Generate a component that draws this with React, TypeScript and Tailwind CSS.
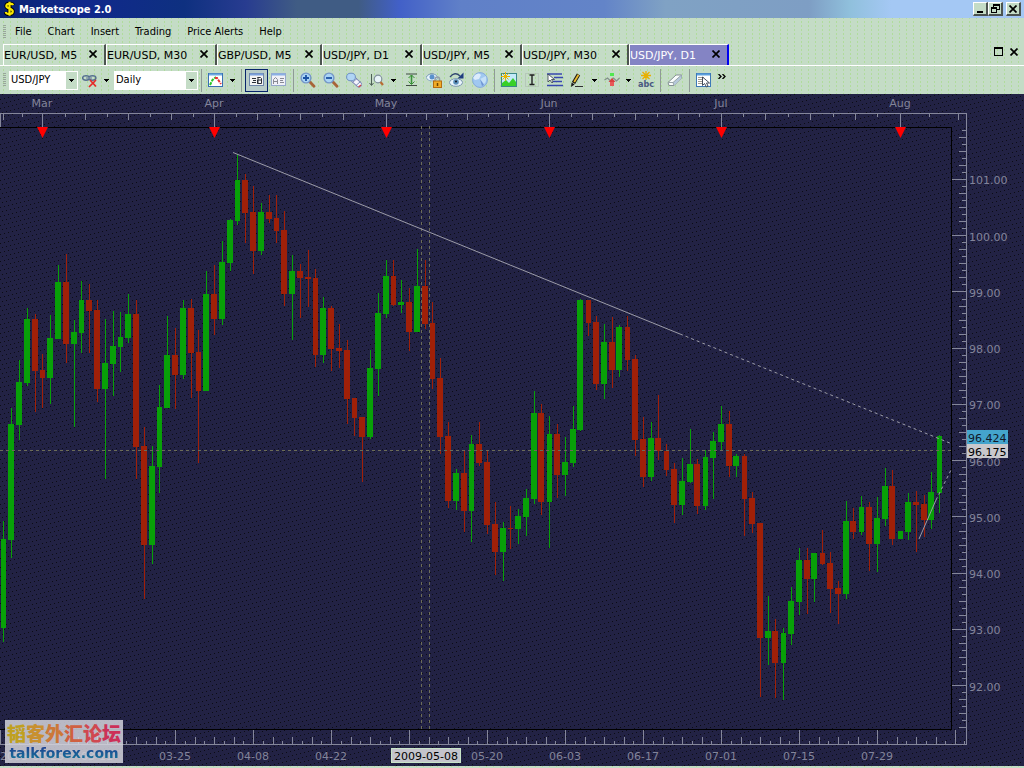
import type { ReactNode } from "react";

const menus = ["File", "Chart", "Insert", "Trading", "Price Alerts", "Help"];

const tabs = [
  { name: "EUR/USD, M5", width: "w-[103px]" },
  { name: "EUR/USD, M30", width: "w-[111px]" },
  { name: "GBP/USD, M5", width: "w-[105px]" },
  { name: "USD/JPY, D1", width: "w-[100px]" },
  { name: "USD/JPY, M5", width: "w-[100px]" },
  { name: "USD/JPY, M30", width: "w-[107px]" },
  { name: "USD/JPY, D1", width: "w-[100px]", active: true },
];

// direction, high, body top, body bottom, low
type Candle = [0 | 1, number, number, number, number];
const candles: Candle[] = [
  [1, 521, 539, 628, 642], [1, 408, 424, 540, 558], [1, 360, 382, 425, 440], [1, 308, 319, 383, 386],
  [0, 314, 319, 371, 412], [0, 354, 370, 378, 408], [1, 315, 338, 378, 404], [1, 265, 282, 339, 339],
  [0, 254, 282, 344, 363], [1, 320, 332, 344, 427], [1, 281, 300, 333, 353], [0, 284, 300, 311, 353],
  [0, 300, 310, 389, 402], [1, 319, 363, 389, 479], [1, 311, 346, 364, 396], [1, 312, 337, 347, 372],
  [1, 294, 314, 338, 343], [0, 300, 314, 447, 479], [0, 427, 446, 545, 599], [1, 446, 466, 545, 564],
  [1, 385, 407, 467, 493], [1, 316, 355, 408, 408], [0, 328, 355, 375, 409], [1, 300, 308, 375, 379],
  [0, 299, 308, 353, 398], [0, 330, 352, 391, 463], [1, 271, 294, 391, 391], [0, 265, 294, 319, 335],
  [1, 241, 262, 319, 325], [1, 219, 220, 263, 271], [1, 154, 180, 221, 225], [0, 174, 180, 213, 243],
  [0, 186, 212, 251, 274], [1, 203, 212, 251, 255], [0, 195, 212, 219, 223], [0, 195, 218, 231, 243],
  [0, 211, 230, 294, 306], [1, 255, 271, 294, 340], [0, 264, 271, 278, 318], [0, 250, 277, 279, 307],
  [0, 269, 278, 355, 367], [1, 297, 308, 355, 363], [0, 306, 308, 349, 371], [0, 324, 348, 351, 368],
  [0, 340, 350, 399, 424], [0, 398, 398, 418, 436], [0, 417, 417, 437, 482], [1, 350, 368, 437, 439],
  [1, 293, 313, 369, 396], [1, 260, 276, 314, 318], [0, 260, 276, 305, 306], [1, 280, 302, 305, 313],
  [0, 288, 302, 332, 351], [1, 249, 286, 332, 332], [0, 260, 286, 324, 329], [0, 302, 323, 379, 389],
  [0, 358, 378, 437, 454], [0, 422, 436, 501, 508], [1, 469, 473, 501, 510], [0, 451, 473, 511, 532],
  [1, 435, 444, 511, 542], [0, 422, 444, 463, 466], [0, 450, 462, 525, 534], [0, 502, 524, 552, 575],
  [1, 522, 528, 552, 581], [0, 506, 528, 529, 549], [1, 509, 516, 529, 544], [1, 489, 498, 517, 536],
  [1, 391, 413, 499, 504], [0, 404, 413, 502, 515], [1, 416, 434, 502, 548], [0, 424, 434, 475, 498],
  [1, 437, 462, 475, 496], [1, 406, 429, 463, 467], [1, 299, 300, 430, 431], [0, 300, 300, 323, 336],
  [0, 316, 322, 384, 390], [1, 324, 342, 384, 399], [0, 317, 342, 370, 388], [1, 325, 327, 370, 377],
  [0, 316, 327, 360, 371], [0, 355, 359, 440, 456], [0, 417, 439, 477, 487], [1, 422, 438, 477, 481],
  [0, 395, 438, 451, 460], [0, 444, 451, 470, 476], [0, 463, 469, 505, 523], [1, 458, 481, 505, 515],
  [1, 429, 464, 482, 483], [0, 459, 464, 506, 514], [1, 450, 457, 506, 510], [1, 432, 441, 458, 499],
  [1, 406, 424, 442, 450], [0, 411, 424, 466, 477], [1, 454, 456, 466, 477], [0, 454, 456, 499, 536],
  [0, 492, 498, 524, 533], [0, 523, 523, 638, 697], [1, 596, 631, 638, 665], [0, 619, 631, 663, 698],
  [1, 628, 633, 663, 700], [1, 587, 601, 634, 645], [1, 548, 560, 602, 615], [0, 548, 560, 579, 614],
  [1, 553, 553, 579, 602], [0, 530, 553, 564, 565], [0, 552, 563, 589, 613], [0, 581, 588, 594, 624],
  [1, 501, 521, 594, 599], [0, 508, 521, 532, 539], [1, 496, 507, 532, 535], [0, 502, 507, 544, 571],
  [1, 497, 518, 544, 572], [1, 468, 486, 519, 526], [0, 470, 486, 539, 545], [1, 531, 531, 539, 539],
  [1, 493, 502, 532, 540], [0, 491, 502, 505, 552], [0, 495, 504, 520, 537], [1, 472, 492, 520, 529],
  [1, 435, 436, 493, 513],
];

const months = [
  { label: "Mar", x: 42 },
  { label: "Apr", x: 214 },
  { label: "May", x: 386 },
  { label: "Jun", x: 549 },
  { label: "Jul", x: 721 },
  { label: "Aug", x: 900 },
];
const topMedium = [3, 85, 128, 171, 257, 300, 343, 426, 467, 508, 592, 635, 678, 765, 810, 855, 958];
const topSmall = [22, 65, 107, 150, 193, 236, 279, 322, 364, 406, 447, 488, 528, 571, 614, 657, 699, 743, 788, 833, 877, 929];

const dates = [
  { label: "03-11", x: 97 },
  { label: "03-25", x: 175 },
  { label: "04-08", x: 253 },
  { label: "04-22", x: 331 },
  { label: "05-20", x: 487 },
  { label: "06-03", x: 565 },
  { label: "06-17", x: 643 },
  { label: "07-01", x: 721 },
  { label: "07-15", x: 799 },
  { label: "07-29", x: 877 },
];

const priceY = (price: number) => Math.round(685.5 - (price - 92) * 56.25);
const prices = [101, 100, 99, 98, 97, 96, 95, 94, 93, 92];
const bottomTicks = Array.from({ length: 98 }, (_, i) => i);
const rightTicks = Array.from({ length: 86 }, (_, i) => i - 7);
const dots = Array.from({ length: 324 }, (_, i) => ({ x: i % 18, y: Math.floor(i / 18) })).filter(
  ({ x, y }) => (x + y * 4) % 18 === 0,
);

function Icon({ children }: { children: ReactNode }) {
  return (
    <svg viewBox="0 0 16 16" className="size-4 shrink-0" aria-hidden="true">
      {children}
    </svg>
  );
}

function Tool({ label, children }: { label: string; children: ReactNode }) {
  return (
    <button type="button" aria-label={label} className="flex size-4 shrink-0 items-center justify-center">
      <Icon>{children}</Icon>
    </button>
  );
}

function Drop({ label }: { label: string }) {
  return (
    <button
      type="button"
      aria-label={label}
      className="-mr-[5px] -ml-[7px] flex h-4 w-4 shrink-0 items-center justify-center"
    >
      <Arrow />
    </button>
  );
}

function Arrow() {
  return (
    <svg viewBox="0 0 5 3" className="h-[3px] w-[5px]" aria-hidden="true" shapeRendering="crispEdges">
      <path d="M0 0h5v1h-1v1h-1v1h-1v-1h-1v-1h-1z" fill="#000" />
    </svg>
  );
}

function Separator() {
  return <span className="-mx-px h-[23px] w-px shrink-0 bg-[#8f9a96]" />;
}

function Grip() {
  return (
    <span className="h-[14px] w-[3px] shrink-0 bg-[repeating-linear-gradient(180deg,#98a69a_0px,#98a69a_1px,transparent_1px,transparent_2px)]" />
  );
}

function Cross() {
  return (
    <svg viewBox="0 0 8 8" className="size-2" aria-hidden="true">
      <path d="M0.5 0.5L7.5 7.5M7.5 0.5L0.5 7.5" stroke="#000" strokeWidth="1.7" />
    </svg>
  );
}

function Combo({ label, value, width }: { label: string; value: string; width: string }) {
  return (
    <label className={`flex h-[19px] shrink-0 items-center border border-white bg-white ${width}`}>
      <select
        aria-label={label}
        defaultValue={value}
        className="min-w-0 flex-1 appearance-none bg-white pl-px text-[11px] leading-4 outline-none"
      >
        <option>{value}</option>
      </select>
      <span className="flex h-full w-[11px] items-center justify-center bg-[#c4dcc6]">
        <Arrow />
      </span>
    </label>
  );
}

function Magnifier({ sign }: { sign: string }) {
  return (
    <>
      <path d="M10 10L14 14.2" stroke="#a86438" strokeWidth="2.8" strokeLinecap="round" />
      <circle cx="6" cy="6" r="4.9" fill="#a9d4f4" stroke="#7596c8" strokeWidth="1.4" />
      <path d={sign} stroke="#1c52a4" strokeWidth="1.8" />
    </>
  );
}

function TitleBar() {
  const control =
    "flex h-[14px] w-[15px] items-center justify-center border-t border-l border-r-2 border-b-2 border-t-white border-l-white border-r-[#4c5450] border-b-[#4c5450] bg-[#c4dcc6]";
  return (
    <header className="flex h-[18px] items-center bg-[linear-gradient(90deg,#0a2472_0%,#10288c_8%,#0e3080_18%,#283c90_24%,#405c84_29%,#405c84_35%,#4260c8_39%,#6080c8_45%,#6384c8_59%,#80a2c4_65%,#7e9ec4_79%,#90c0dc_83%,#a4c8f4_87%,#a4c8f4_100%)] pr-[3px] pl-1">
      <svg viewBox="0 0 11 16" className="h-4 w-[11px]" aria-hidden="true">
        <path
          d="M5.5 0.8v14M9 4.2C8.4 2.4 2.4 1.8 2.3 5C2.2 8 8.9 7 8.8 10.5C8.7 14 2 13.6 1.8 11"
          stroke="#000"
          strokeWidth="4"
          fill="none"
        />
        <path
          d="M5.5 0.8v14M9 4.2C8.4 2.4 2.4 1.8 2.3 5C2.2 8 8.9 7 8.8 10.5C8.7 14 2 13.6 1.8 11"
          stroke="#f8e800"
          strokeWidth="2.2"
          fill="none"
        />
      </svg>
      <h1 className="ml-1 flex-1 pt-px font-['DejaVu_Sans_Condensed','DejaVu_Sans',sans-serif] text-[11px] leading-4 font-bold text-white">
        Marketscope 2.0
      </h1>
      <button type="button" aria-label="Minimize" className={control}>
        <span className="mt-1.5 h-0.5 w-1.5 bg-black" />
      </button>
      <button type="button" aria-label="Restore" className={control}>
        <svg viewBox="0 0 9 9" className="size-[9px]" aria-hidden="true" shapeRendering="crispEdges">
          <path d="M2.5 3V0.5h6v5H6M2 1.5h6M0.5 3.5h5v5h-5zM0 4.5h6" stroke="#000" fill="none" />
        </svg>
      </button>
      <button type="button" aria-label="Close" className={`ml-[3px] ${control}`}>
        <Cross />
      </button>
    </header>
  );
}

function Toolbar() {
  return (
    <div role="toolbar" aria-label="Chart tools" className="flex h-7 items-center gap-[7px] pl-[3px]">
      <div className="flex items-center gap-[3px]">
        <Grip />
        <Combo label="Instrument" value="USD/JPY" width="w-[69px]" />
      </div>
      <div className="-mr-[2px] -ml-[3px] flex items-center gap-[7px]">
        <Tool label="Unlink">
          <ellipse cx="4" cy="6" rx="3.4" ry="2.2" fill="none" stroke="#567090" strokeWidth="1.5" />
          <ellipse cx="10.5" cy="6" rx="3.4" ry="2.2" fill="none" stroke="#567090" strokeWidth="1.5" />
          <path d="M4 6h6" stroke="#7d90a8" strokeWidth="1.4" />
          <path d="M8 8l6 6.5M14 8l-7 7" stroke="#e62828" strokeWidth="1.7" />
        </Tool>
        <Drop label="Link options" />
      </div>
      <div className="-mr-[3px]">
        <Combo label="Period" value="Daily" width="w-[84px]" />
      </div>
      <Separator />
      <Tool label="Chart type">
        <rect x="0.5" y="1.5" width="14" height="13" fill="#fff" stroke="#3870b4" />
        <path d="M1 2.5h13" stroke="#6eaae0" strokeWidth="2" />
        <path d="M2 13l2.500-5l3.500-3" stroke="#28c828" strokeWidth="2" strokeDasharray="3 1" fill="none" />
        <path d="M7 6h2l2 3l2 3" stroke="#e63232" strokeWidth="2" strokeDasharray="3 1" fill="none" />
      </Tool>
      <Drop label="Chart type options" />
      <Separator />
      <button
        type="button"
        aria-label="Bid prices"
        aria-pressed="true"
        className="-mr-1 -ml-[3px] flex h-[23px] w-[23px] shrink-0 items-center justify-center border border-[#08246b] bg-[#b8ccc8]"
      >
        <Icon>
          <rect x="0.5" y="1.5" width="14" height="12" fill="#f4f4f4" stroke="#7088ac" />
          <path d="M1 2.5h13" stroke="#7aa0dc" strokeWidth="2" />
          <path d="M3 6.500h4M4 8.500h3M3 10.500h4" stroke="#2c3038" fill="none" />
          <path d="M8.500 5.500h3l1 1v1.500h-4v3.500h4v-3.500M9 5v7" stroke="#2c3038" fill="none" />
        </Icon>
      </button>
      <Tool label="Ask prices">
        <rect x="0.5" y="1.5" width="14" height="12" fill="#f0f0f8" stroke="#96a8cc" />
        <path d="M1 2.5h13" stroke="#8ab0e4" strokeWidth="2" />
        <path d="M2.5 12V7.5L4.5 5.5L6.5 7.5V12M3 9.5h3.5M9 6.5h4M9 8.5h3M9 10.5h4" stroke="#888a94" fill="none" />
      </Tool>
      <Separator />
      <Tool label="Zoom in">
        <Magnifier sign="M3 6h6M6 3v6" />
      </Tool>
      <Tool label="Zoom out">
        <Magnifier sign="M3 6h6" />
      </Tool>
      <Tool label="Zoom back">
        <path d="M7 7l6 5.500" stroke="#8088b8" strokeWidth="6" strokeLinecap="round" />
        <path d="M7 7l6 5.500" stroke="#f4f4fc" strokeWidth="4.400" strokeLinecap="round" />
        <ellipse cx="5" cy="5" rx="4.4" ry="3.8" fill="#b0d4f4" stroke="#6d90c4" />
        <path d="M6.500 10.500l4.500-4M10 13.500l4.500-4" stroke="#6d80a8" strokeWidth="0.900" />
        <path d="M12.500 15l2.500-2" stroke="#d04040" strokeWidth="1.3" />
      </Tool>
      <Tool label="Vertical zoom">
        <path d="M2.5 2v11M0.500 11l2 2.500l2-2.500" stroke="#4c6054" fill="none" />
        <circle cx="9" cy="7" r="3.8" fill="#e8f4f8" stroke="#80909c" strokeWidth="1.2" />
        <path d="M11.5 10l2.5 3" stroke="#b86c34" strokeWidth="2.2" />
      </Tool>
      <Drop label="Zoom options" />
      <Tool label="Fit vertically">
        <path d="M3 2h11M3 13.500h11" stroke="#404c44" />
        <path d="M8.5 3v9" stroke="#389038" strokeWidth="1.6" />
        <path d="M5.5 6l3-3l3 3M5.5 9.500l3 3l3-3" stroke="#389038" fill="none" />
      </Tool>
      <Tool label="Lock view">
        <path d="M0 5q5-6 11-1" stroke="#607890" fill="none" />
        <ellipse cx="6" cy="5.5" rx="5.500" ry="3.400" fill="#e8f4fc" stroke="#8cacc4" />
        <circle cx="6" cy="5" r="2.500" fill="#5890cc" />
        <path d="M9 9V7.500a2.300 2.500 0 0 1 4.600 0V9" stroke="#94a0a8" strokeWidth="1.500" fill="none" />
        <rect x="7.500" y="9" width="8" height="6.500" fill="#f0ac28" stroke="#b46c10" />
        <path d="M11.500 11v3" stroke="#704400" strokeWidth="1.500" />
      </Tool>
      <Tool label="Follow price">
        <ellipse cx="7" cy="10.500" rx="6.500" ry="3.800" fill="#e8f4fc" stroke="#7c98b0" />
        <circle cx="7" cy="10" r="2.800" fill="#5c90bc" />
        <circle cx="7" cy="9.500" r="1" fill="#101828" />
        <path d="M1 5q5-6 10-1" stroke="#344870" strokeWidth="1.300" fill="none" />
        <path d="M14.500 0.500v6h-6z" fill="#203c80" />
      </Tool>
      <Tool label="World view">
        <circle cx="8" cy="8" r="7.400" fill="#a0c8f0" stroke="#84aadc" />
        <path d="M3 3q4-3 6 0l-2 4l-4 1l-2-2z" fill="#dcecfc" />
        <path d="M8 7l6-3q1 5-2 8z" fill="#c4e0f8" />
        <path d="M8 7l4 6l-2 1z" fill="#6e94d4" />
      </Tool>
      <Separator />
      <Tool label="Indicators">
        <rect x="0.500" y="1.500" width="15" height="13" fill="#c4eaf8" stroke="#3c8888" />
        <path d="M1 14v-3l4-3l3 3l4-5l3 4v4z" fill="#38d028" />
        <path d="M4.500 0v9M0 4.500h9M1.500 1.500l6 6M7.500 1.500l-6 6" stroke="#e8b400" />
      </Tool>
      <Tool label="Text note">
        <rect x="1.500" y="1.500" width="13" height="13" fill="none" stroke="#a8b4ac" strokeDasharray="1 1" />
        <path d="M5.500 3h5M5.500 12.500h5M8 3v9" stroke="#202020" strokeWidth="1.400" />
      </Tool>
      <Tool label="Horizontal lines">
        <path d="M0 2h15M7 5.500h9M6 9.500h9M0 13.500h16" stroke="#3848b0" strokeWidth="1.400" />
        <path d="M1 2v8l2-2l2 3l1-1l-1.500-2.500h3z" fill="#fff" stroke="#303848" strokeWidth="0.800" />
      </Tool>
      <Tool label="Draw">
        <path d="M3.500 11L8.500 2.500" stroke="#201c10" strokeWidth="3.800" />
        <path d="M4.200 10L8.500 2.800" stroke="#e8bc30" strokeWidth="1.800" />
        <path d="M1.600 10.500l-.600 4.500l3.600-2.500z" fill="#181818" />
        <path d="M5 14.500h8" stroke="#303030" />
      </Tool>
      <Drop label="Draw options" />
      <Tool label="Signals">
        <rect x="6" y="1" width="4" height="3" fill="#50e850" />
        <path d="M0.500 8l3-2l3 3l3-3l3 3l3-3" stroke="#84908c" strokeWidth="1.200" fill="none" />
        <path d="M8 6l3.500 4H4.500z" fill="#d84040" />
        <rect x="6" y="10" width="4" height="4" fill="#e85858" />
      </Tool>
      <Drop label="Signal options" />
      <button type="button" aria-label="Label" className="flex h-[18px] w-4 shrink-0 flex-col items-center">
        <svg viewBox="0 0 10 9" className="h-[9px] w-[10px] shrink-0" aria-hidden="true">
          <path d="M5 0v9M0 4.500h10M1.500 1l7 7M8.500 1l-7 7" stroke="#e8b000" strokeWidth="1.300" />
        </svg>
        <span className="text-[9px] leading-[8px] font-bold text-[#485880]">abc</span>
      </button>
      <Separator />
      <Tool label="Erase">
        <path d="M1 10.500L9 3h5.500v3L7 13.500H2z" fill="#f8fcfc" stroke="#849094" />
        <path d="M7 13.500L14.500 6V3L6 10.500z" fill="#b4c8dc" />
        <path d="M1 10.500h5L14.500 3M6 10.500l1 3" stroke="#98a4a8" fill="none" />
      </Tool>
      <Separator />
      <Tool label="Data window">
        <rect x="0.500" y="1.500" width="14" height="13" fill="#fff" stroke="#3c78b8" />
        <path d="M1 2.500h13" stroke="#5ca0dc" strokeWidth="2" />
        <path d="M2 5.500h6M2 7.500h4M2 9.500h4M2 11.500h4" stroke="#a09c90" />
        <path d="M6.500 5v8.500l2-2l2 3.500l1.500-1l-1.500-3h3z" fill="#fff" stroke="#303848" strokeWidth="0.900" />
      </Tool>
      <button type="button" aria-label="More tools" className="mb-2 -ml-px">
        <svg viewBox="0 0 8 5" className="h-[5px] w-2" aria-hidden="true">
          <path d="M0.500 0l2.500 2.500l-2.500 2.500M4.500 0l2.500 2.500l-2.500 2.500" stroke="#000" strokeWidth="1.300" fill="none" />
        </svg>
      </button>
    </div>
  );
}

function PriceChart() {
  return (
    <svg
      viewBox="0 94 1024 672"
      className="block w-full bg-[#222244] font-['DejaVu_Sans',sans-serif] text-[11px]"
      role="img"
      aria-label="USD/JPY daily candles"
    >
      <defs>
        <pattern id="weave" width="18" height="18" patternUnits="userSpaceOnUse">
          {dots.map(({ x, y }) => (
            <rect key={`${x}-${y}`} x={x} y={y} width="1" height="1" fill="#0c0c14" />
          ))}
        </pattern>
      </defs>
      <rect y="94" width="1024" height="672" fill="url(#weave)" shapeRendering="crispEdges" />

      <g stroke="#84869a" fill="none" shapeRendering="crispEdges">
        <path d="M0 113.5H966.5V744.5H0M0.500 113V127M0.500 730V744M964.500 741V744" />
        {months.map(({ x }) => (
          <path key={x} d={`M${x + 0.5} 114V127`} />
        ))}
        {topMedium.map((x) => (
          <path key={x} d={`M${x + 0.5} 114V120`} />
        ))}
        {topSmall.map((x) => (
          <path key={x} d={`M${x + 0.5} 114V117`} />
        ))}
        {bottomTicks.map((i) => (
          <path
            key={i}
            d={`M${Math.round(19 + (i - 1) * 9.75) + 0.5} 744V${i % 8 === 1 ? 730 : i % 2 === 1 ? 737 : 741}`}
          />
        ))}
        {rightTicks.map((i) => (
          <path
            key={i}
            d={`M966 ${Math.round(179 + i * 7.03) + 0.5}H${i % 8 === 0 ? 952 : i % 2 === 0 ? 959 : 962}`}
          />
        ))}
      </g>

      <path d="M0 127.500H951.500V729.500H0" stroke="#000" fill="none" shapeRendering="crispEdges" />

      <g shapeRendering="crispEdges">
        {candles.map(([up, high, top, bottom, low], i) => {
          const x = Math.round(3.3 + i * 7.8);
          const narrow = i % 5 === 0;
          return (
            <g key={i} fill={up ? "#08a008" : "#a02008"}>
              <rect x={x} y={high} width="1" height={low - high} />
              <rect x={narrow ? x - 2 : x - 3} y={top} width={narrow ? 5 : 6} height={bottom - top} />
            </g>
          );
        })}
      </g>

      <g stroke="#6c6c58" strokeDasharray="3 3" shapeRendering="crispEdges">
        <path d="M0 450.500H951" />
        <path d="M421.500 126V729" />
        <path d="M429.500 126V729" />
      </g>
      <g stroke="#9c9ca8" fill="none">
        <path d="M233 152.500L680 334" />
        <path d="M680 334L951 443.500" strokeDasharray="3 3" />
        <path d="M919 539L936 500" />
        <path d="M936 500L951 470" strokeDasharray="3 3" />
      </g>

      {months.map(({ label, x }) => (
        <g key={label}>
          <path d={`M${x - 5} 127h11l-5.500 11z`} fill="#ff0000" />
          <text x={x} y="107" textAnchor="middle" fill="#82849a">
            {label}
          </text>
        </g>
      ))}

      <g fill="#82849a">
        {prices.map((price) => (
          <text key={price} x="969" y={priceY(price) + 5}>
            {price.toFixed(2)}
          </text>
        ))}
        <text x="0" y="760">
          2009-02-25
        </text>
        {dates.map(({ label, x }) => (
          <text key={label} x={x} y="760" textAnchor="middle">
            {label}
          </text>
        ))}
      </g>

      <rect x="967" y="430" width="41" height="14" fill="#44a4cc" />
      <text x="968" y="442" fill="#101828">
        96.424
      </text>
      <rect x="967" y="444" width="41" height="14" fill="#c8c8cc" />
      <text x="968" y="456" fill="#000">
        96.175
      </text>
      <rect x="391.500" y="748.500" width="69" height="14" fill="#c4c4cc" stroke="#c8e4c8" />
      <text x="426" y="760" textAnchor="middle" fill="#000">
        2009-05-08
      </text>
    </svg>
  );
}

function Watermark() {
  return (
    <div className="absolute bottom-[3px] left-[5px] flex h-[43px] w-[118px] flex-col items-center bg-[#d4d4dc]/85">
      <p className="flex font-['Noto_Sans_CJK_SC',sans-serif] text-[19px] leading-[25px] font-black">
        <span className="text-[#c0a020]">韬</span>
        <span className="text-[#c89030]">客</span>
        <span className="text-[#cc7838]">外</span>
        <span className="text-[#d06040]">汇</span>
        <span className="text-[#d04850]">论</span>
        <span className="text-[#cc3058]">坛</span>
      </p>
      <p className="bg-linear-to-b from-[#203890] to-[#107898] bg-clip-text text-[14px] leading-4 font-bold text-transparent">
        talkforex.com
      </p>
    </div>
  );
}

export default function App() {
  return (
    <div className="flex min-h-screen flex-col bg-[#c4dcc6] bg-[radial-gradient(circle,#b0dc9c_0.5px,transparent_0.9px)] bg-[size:7px_4px] font-['DejaVu_Sans',sans-serif] text-black">
      <TitleBar />

      <nav
        aria-label="Main menu"
        className="flex h-[26px] items-center gap-4 pt-px pl-[3px] font-['DejaVu_Sans_Condensed','DejaVu_Sans',sans-serif] text-[11px] leading-4"
      >
        <div className="flex items-center gap-[9px]">
          <Grip />
          <button type="button">{menus[0]}</button>
        </div>
        {menus.slice(1).map((name) => (
          <button key={name} type="button">
            {name}
          </button>
        ))}
      </nav>

      <div className="flex h-[22px] items-stretch border-b border-white pl-[3px] text-[11px]">
        {tabs.map(({ name, width, active }, i) => (
          <div
            key={i}
            className={`flex items-center justify-between border-t border-r-2 border-l border-t-white border-l-white pt-px pr-[7px] ${width} ${
              active ? "border-r-[#0000f0] bg-[#8484c4] text-white" : "border-r-[#4c5450]"
            }`}
          >
            <button type="button" className="leading-4 whitespace-nowrap">
              {name}
            </button>
            <button type="button" aria-label={`Close ${name}`} className="mb-1">
              <Cross />
            </button>
          </div>
        ))}
        <div className="ml-auto flex items-center gap-[7px] pr-1.5 pb-1.5">
          <button type="button" aria-label="Maximize chart" className="h-[9px] w-[9px] border border-t-2 border-black" />
          <button type="button" aria-label="Close chart">
            <Cross />
          </button>
        </div>
      </div>

      <div className="font-['DejaVu_Sans_Condensed','DejaVu_Sans',sans-serif]">
        <Toolbar />
      </div>

      <main className="relative">
        <PriceChart />
        <Watermark />
      </main>
    </div>
  );
}
